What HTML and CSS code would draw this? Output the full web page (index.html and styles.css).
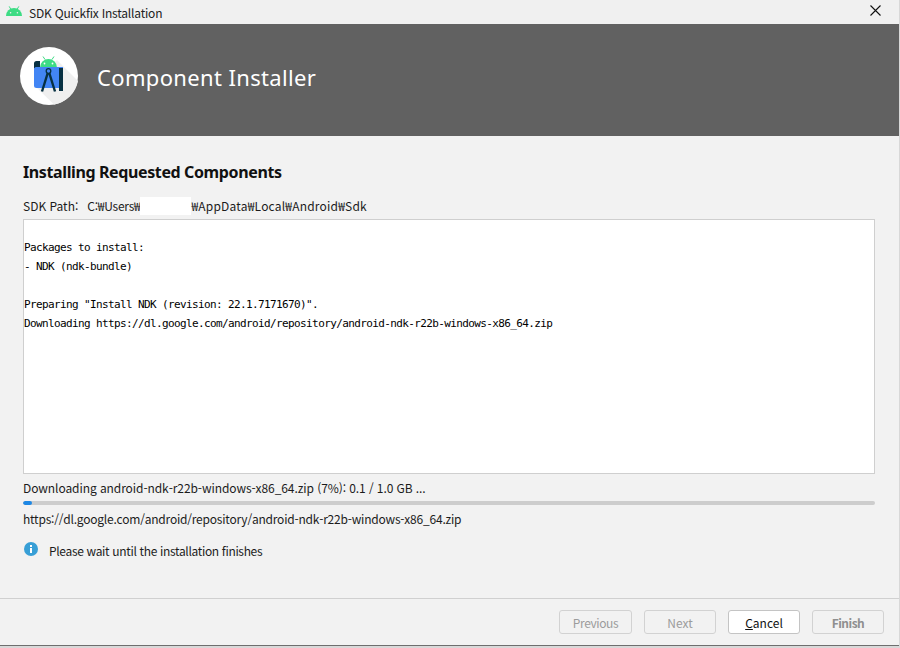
FILE: index.html
```html
<!DOCTYPE html>
<html lang="ko">
<head>
<meta charset="utf-8">
<title>SDK Quickfix Installation</title>
<link rel="stylesheet" href="styles.css">
</head>
<body>
<div class="window">
  <div class="titlebar">
    <svg class="droid" viewBox="0 0 16 10" width="16" height="10"><path d="M0 10a8 8 0 0 1 16 0z" fill="#3ddc84"/><path d="M3.200 0.400l1.600 2.800M12.800 0.400l-1.600 2.800" stroke="#3ddc84" stroke-width="1"/><circle cx="4.600" cy="6.800" r=".8" fill="#f0f0f0"/><circle cx="11.400" cy="6.800" r=".8" fill="#f0f0f0"/></svg>
    <span class="title">SDK Quickfix Installation</span>
    <svg class="close" viewBox="0 0 11 11" width="11" height="11"><path d="M.5.5l10 10M10.500.5l-10 10" stroke="#111" stroke-width="1.100" fill="none"/></svg>
  </div>
  <header class="banner">
    <div class="logo">
      <svg viewBox="0 0 58 58" width="58" height="58">
        <circle cx="29" cy="29" r="29" fill="#fff"/>
        <path d="M37 13L58 34A29 29 0 0 1 34 57.500L14 38z" fill="#efefef"/>
        <path d="M20 20.500a8.500 8.500 0 0 1 17 0z" fill="#3ddc84"/>
        <path d="M23 9.500l2 3M34 9.500l-2 3" stroke="#3ddc84" stroke-width="1"/>
        <circle cx="24.500" cy="16.500" r=".9" fill="#fff"/><circle cx="32.500" cy="16.500" r=".9" fill="#fff"/>
        <path d="M14 16.500a2.500 2.500 0 0 1 2.500-2.500H20v6.500h-3.500a2.500 2.500 0 0 0-2.500 2z" fill="#073042"/>
        <path d="M14 22.500a2.500 2.500 0 0 1 2.500-2.500H43V41H16.500a2.500 2.500 0 0 1-2.500-2.500z" fill="#4285f4"/>
        <path d="M28.500 23.500l-6.500 21M28.500 23.500l6.500 21" stroke="#073042" stroke-width="2.400" fill="none"/>
        <circle cx="28.500" cy="24" r="2.300" fill="#4285f4" stroke="#073042" stroke-width="1.300"/>
        <path d="M39 21h4v23h-4z" fill="#073042"/>
      </svg>
    </div>
    <h1 class="banner-title">Component Installer</h1>
  </header>
  <main class="content">
    <h2 class="heading">Installing Requested Components</h2>
    <div class="path-row">
      <span class="path-label">SDK Path:</span>
      <span class="path-value"><span class="path-head">C:₩Users₩</span><span class="redact"></span><span class="path-tail">₩AppData₩Local₩Android₩Sdk</span></span>
    </div>
    <pre class="log">
Packages to install:
- NDK (ndk-bundle)

Preparing "Install NDK (revision: 22.1.7171670)".
Downloading https://dl.google.com/android/repository/android-ndk-r22b-windows-x86_64.zip</pre>
    <div class="status">Downloading android-ndk-r22b-windows-x86_64.zip (7%): 0.1 / 1.0 GB ...</div>
    <div class="track"><div class="fill"></div></div>
    <div class="url">https://dl.google.com/android/repository/android-ndk-r22b-windows-x86_64.zip</div>
    <div class="notice">
      <svg viewBox="0 0 14 14" width="14" height="14"><circle cx="7" cy="7" r="7" fill="#389fd6"/><rect x="6" y="6" width="2" height="5" fill="#fff"/><rect x="6" y="3" width="2" height="2" fill="#fff"/></svg>
      <span class="notice-text">Please wait until the installation finishes</span>
    </div>
  </main>
  <footer class="footer">
    <button class="btn prev" disabled>Previous</button>
    <button class="btn" disabled>Next</button>
    <button class="btn primary"><u>C</u>ancel</button>
    <button class="btn finish" disabled>Finish</button>
  </footer>
</div>
</body>
</html>
```
FILE: styles.css
```css
* { box-sizing: border-box; }
html, body { margin: 0; padding: 0; }
body {
  width: 900px;
  height: 648px;
  overflow: hidden;
  background: #d8d8d8;
  font-family: "Noto Sans CJK KR", "Noto Sans", sans-serif;
  color: #1c1c1c;
}
.window {
  width: 899px;
  height: 646px;
  background: #f2f2f2;
  border-bottom: 1px solid #6e6e6e;
  display: flex;
  flex-direction: column;
}
.titlebar {
  height: 24px;
  flex: none;
  background: #f0f0f0;
  display: flex;
  align-items: center;
  padding: 0 19px 0 6px;
}
.droid { flex: none; margin-top: -3px; }
.title { margin-left: 7px; font-size: 12px; letter-spacing: -.2px; color: #222; flex: 1; }
.close { flex: none; margin-right: -1px; margin-top: -4px; }
.banner {
  height: 112px;
  flex: none;
  background: #616161;
  display: flex;
  align-items: center;
  padding: 0 0 8px 20px;
}
.logo { width: 58px; height: 58px; flex: none; }
.logo svg { display: block; }
.banner-title {
  margin: 2px 0 0 19px;
  font-size: 22px;
  font-weight: 400;
  color: #fff;
  font-family: "Noto Sans", sans-serif;
  letter-spacing: .35px;
}
.content {
  flex: 1;
  padding: 25px 24px 0 23px;
  display: flex;
  flex-direction: column;
}
.heading {
  margin: 0;
  height: 22px;
  line-height: 22px;
  font-size: 16px;
  font-weight: 700;
  letter-spacing: -.38px;
  color: #111;
  font-family: "Noto Sans", sans-serif;
}
.path-row {
  margin-top: 13px;
  height: 20px;
  display: flex;
  align-items: center;
  font-size: 12px;
  line-height: 18px;
}
.path-value { margin-left: 9px; display: flex; align-items: center; }
.path-head { letter-spacing: -.25px; }
.path-tail { letter-spacing: .2px; }
.redact { display: inline-block; width: 51px; height: 18px; background: #fff; }
.log {
  margin: 3px 0 0;
  height: 255px;
  background: #fff;
  border: 1px solid #cfcfcf;
  padding: 18px 0 0;
  font-family: "DejaVu Sans Mono", monospace;
  font-size: 11px;
  letter-spacing: -.62px;
  line-height: 19px;
  color: #000;
  white-space: pre;
  overflow: hidden;
}
.status, .url { font-size: 12px; line-height: 18px; height: 18px; }
.status { margin-top: 5px; letter-spacing: -.08px; }
.track { margin-top: 4px; height: 4px; background: #cdcdcd; border-radius: 2px; overflow: hidden; }
.fill { width: 9px; height: 100%; background: #1e88e5; border-radius: 2px; }
.url { margin-top: 5px; letter-spacing: -.21px; }
.notice {
  margin-top: 13px;
  height: 18px;
  display: flex;
  align-items: center;
  font-size: 12px;
  gap: 11px;
  padding-left: 1px;
}
.notice-text { letter-spacing: -.33px; }
.notice svg { flex: none; margin-top: -3px; }
.footer {
  height: 47px;
  flex: none;
  border-top: 1px solid #d0d0d0;
  display: flex;
  justify-content: flex-end;
  gap: 12px;
  padding: 11px 15px 0 0;
}
.btn {
  width: 72px;
  height: 24px;
  padding: 0;
  background: #f2f2f2;
  border: 1px solid #d2d2d2;
  border-radius: 3px;
  font-family: inherit;
  font-size: 12px;
  color: #9c9c9c;
}
.prev { width: 73px; letter-spacing: -.4px; }
.primary { background: #fff; border-color: #c4c4c4; color: #111; }
.finish { font-weight: 700; letter-spacing: -.5px; color: #8f8f8f; }
```
